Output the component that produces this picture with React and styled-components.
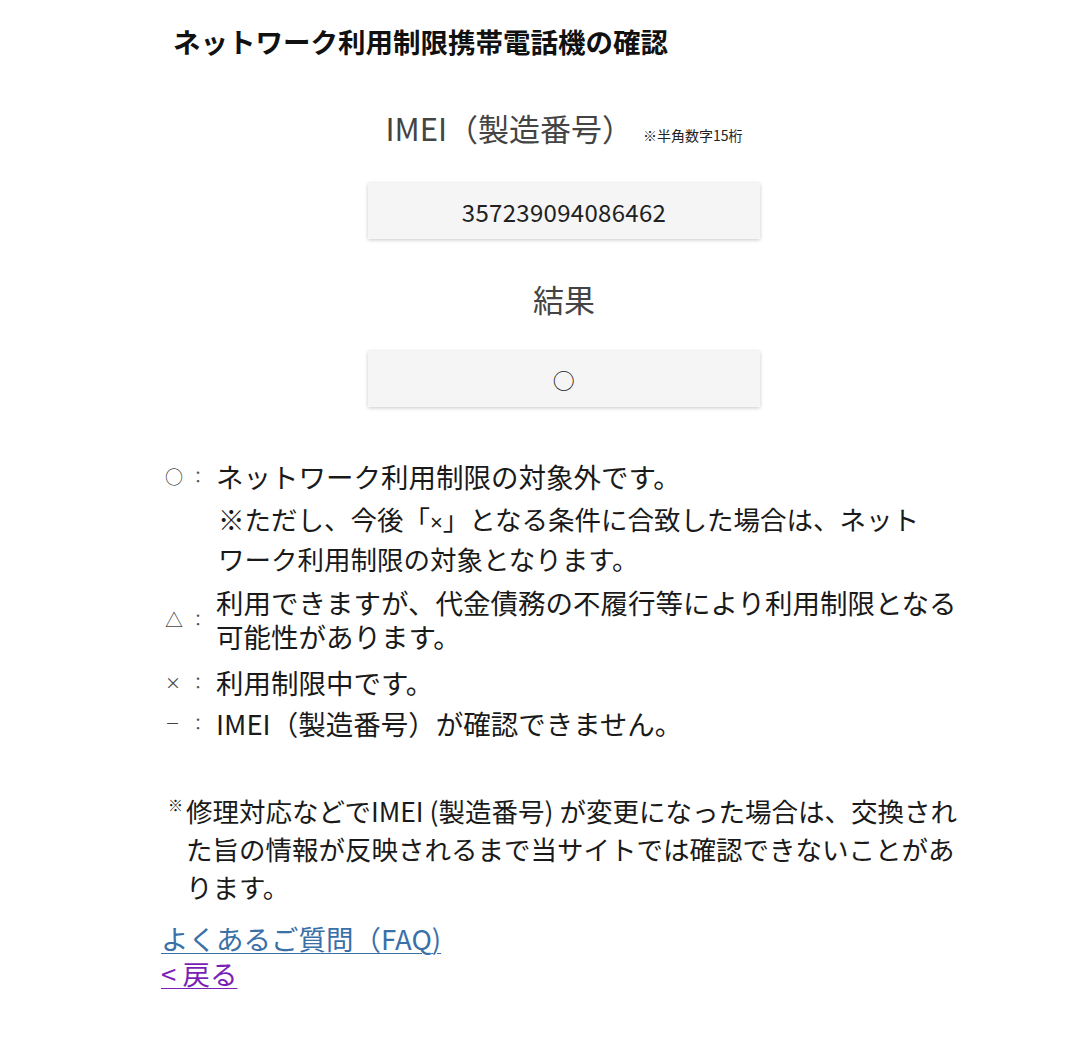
import React from "react";
import styled, { createGlobalStyle } from "styled-components";

const Global = createGlobalStyle`
  html, body { margin: 0; padding: 0; background: #fff; }
  body { font-family: "Noto Sans CJK JP", "Noto Sans", sans-serif; color: #222; }
`;

const Page = styled.main`
  margin-left: 161px;
  width: 806px;
  padding-top: 24px;
  padding-bottom: 40px;
`;

const Title = styled.h1`
  margin: 0 0 0 12px;
  font-size: 27.5px;
  line-height: 34px;
  font-weight: 700;
  color: #111;
`;

const FieldLabel = styled.div`
  margin-top: ${(p) => p.$top}px;
  text-align: center;
  font-size: 31px;
  line-height: 40px;
  color: #444;
  font-weight: 400;
`;

const Hint = styled.span`
  font-size: 14px;
  line-height: 1;
  margin-left: 10px;
  color: #222;
`;

const ValueBox = styled.div`
  margin: ${(p) => p.$top}px auto 0;
  width: 392px;
  height: 56px;
  background: #f5f5f5;
  box-shadow: 0 1px 4px rgba(0, 0, 0, 0.22);
  display: flex;
  align-items: center;
  justify-content: center;
  font-size: ${(p) => p.$size}px;
  color: #222;
  letter-spacing: 0.3px;
`;

const Legend = styled.div`
  margin-top: 48px;
  display: flex;
  flex-direction: column;
`;

const LegendRow = styled.div`
  display: flex;
  align-items: ${(p) => (p.$center ? "center" : "flex-start")};
  margin-top: ${(p) => p.$top || 0}px;
  font-size: 27.5px;
  line-height: ${(p) => p.$lh || 40}px;
  color: #1a1a1a;
`;

const Marker = styled.span`
  width: 25px;
  padding-left: 4px;
  font-size: ${(p) => p.$size || 18}px;
  color: #444;
  line-height: inherit;
  flex: none;
`;

const Colon = styled.span`
  width: 26px;
  font-size: 16px;
  color: #555;
  flex: none;
  text-align: left;
`;

const LegendText = styled.div`
  flex: 1;
`;

const FirstLine = styled.div`
  line-height: 42px;
`;

const SubNote = styled.div`
  margin-top: 2px;
  padding-left: 2px;
  font-size: 26.5px;
  line-height: 40px;
`;

const Cross = styled.span`
  font-family: "Liberation Sans", Arial, sans-serif;
  font-size: 22px;
  line-height: 1;
`;

const Note = styled.p`
  margin: 49px 0 0;
  padding-left: 25px;
  font-size: 26.5px;
  line-height: 38px;
  color: #1a1a1a;
`;

const NoteMark = styled.span`
  display: inline-block;
  width: 18px;
  margin-left: -18px;
  font-size: 15px;
  vertical-align: top;
  line-height: 26px;
`;

const LinkList = styled.div`
  margin-top: 15px;
  display: flex;
  flex-direction: column;
  align-items: flex-start;
`;

const TextLink = styled.a`
  font-size: 27.5px;
  line-height: 35px;
  color: ${(p) => p.$color};
  text-decoration: underline;
  text-underline-offset: 3px;
  text-decoration-thickness: 1px;
`;

export default function App() {
  return (
    <>
      <Global />
      <Page>
        <Title>ネットワーク利用制限携帯電話機の確認</Title>

        <FieldLabel $top={50}>
          IMEI（製造番号）<Hint>※半角数字15桁</Hint>
        </FieldLabel>
        <ValueBox $top={35} $size={24}>357239094086462</ValueBox>

        <FieldLabel $top={40}>結果</FieldLabel>
        <ValueBox $top={32} $size={22}>○</ValueBox>

        <Legend>
          <LegendRow>
            <Marker style={{ lineHeight: "42px" }}>○</Marker>
            <Colon style={{ lineHeight: "42px" }}>：</Colon>
            <LegendText>
              <FirstLine>ネットワーク利用制限の対象外です。</FirstLine>
              <SubNote>
                ※ただし、今後「<Cross>×</Cross>」となる条件に合致した場合は、ネット
                <br />
                ワーク利用制限の対象となります。
              </SubNote>
            </LegendText>
          </LegendRow>
          <LegendRow $center $lh={34} $top={6}>
            <Marker>△</Marker>
            <Colon>：</Colon>
            <LegendText>
              利用できますが、代金債務の不履行等により利用制限となる
              <br />
              可能性があります。
            </LegendText>
          </LegendRow>
          <LegendRow $top={9}>
            <Marker $size={16}>×</Marker>
            <Colon>：</Colon>
            <LegendText>利用制限中です。</LegendText>
          </LegendRow>
          <LegendRow $top={1}>
            <Marker $size={15}>－</Marker>
            <Colon>：</Colon>
            <LegendText>IMEI（製造番号）が確認できません。</LegendText>
          </LegendRow>
        </Legend>

        <Note>
          <NoteMark>※</NoteMark>修理対応などでIMEI (製造番号) が変更になった場合は、交換され
          <br />
          た旨の情報が反映されるまで当サイトでは確認できないことがあ
          <br />
          ります。
        </Note>

        <LinkList>
          <TextLink href="#faq" $color="#3a70a8">よくあるご質問（FAQ)</TextLink>
          <TextLink href="#back" $color="#7a1fb5">&lt; 戻る</TextLink>
        </LinkList>
      </Page>
    </>
  );
}
